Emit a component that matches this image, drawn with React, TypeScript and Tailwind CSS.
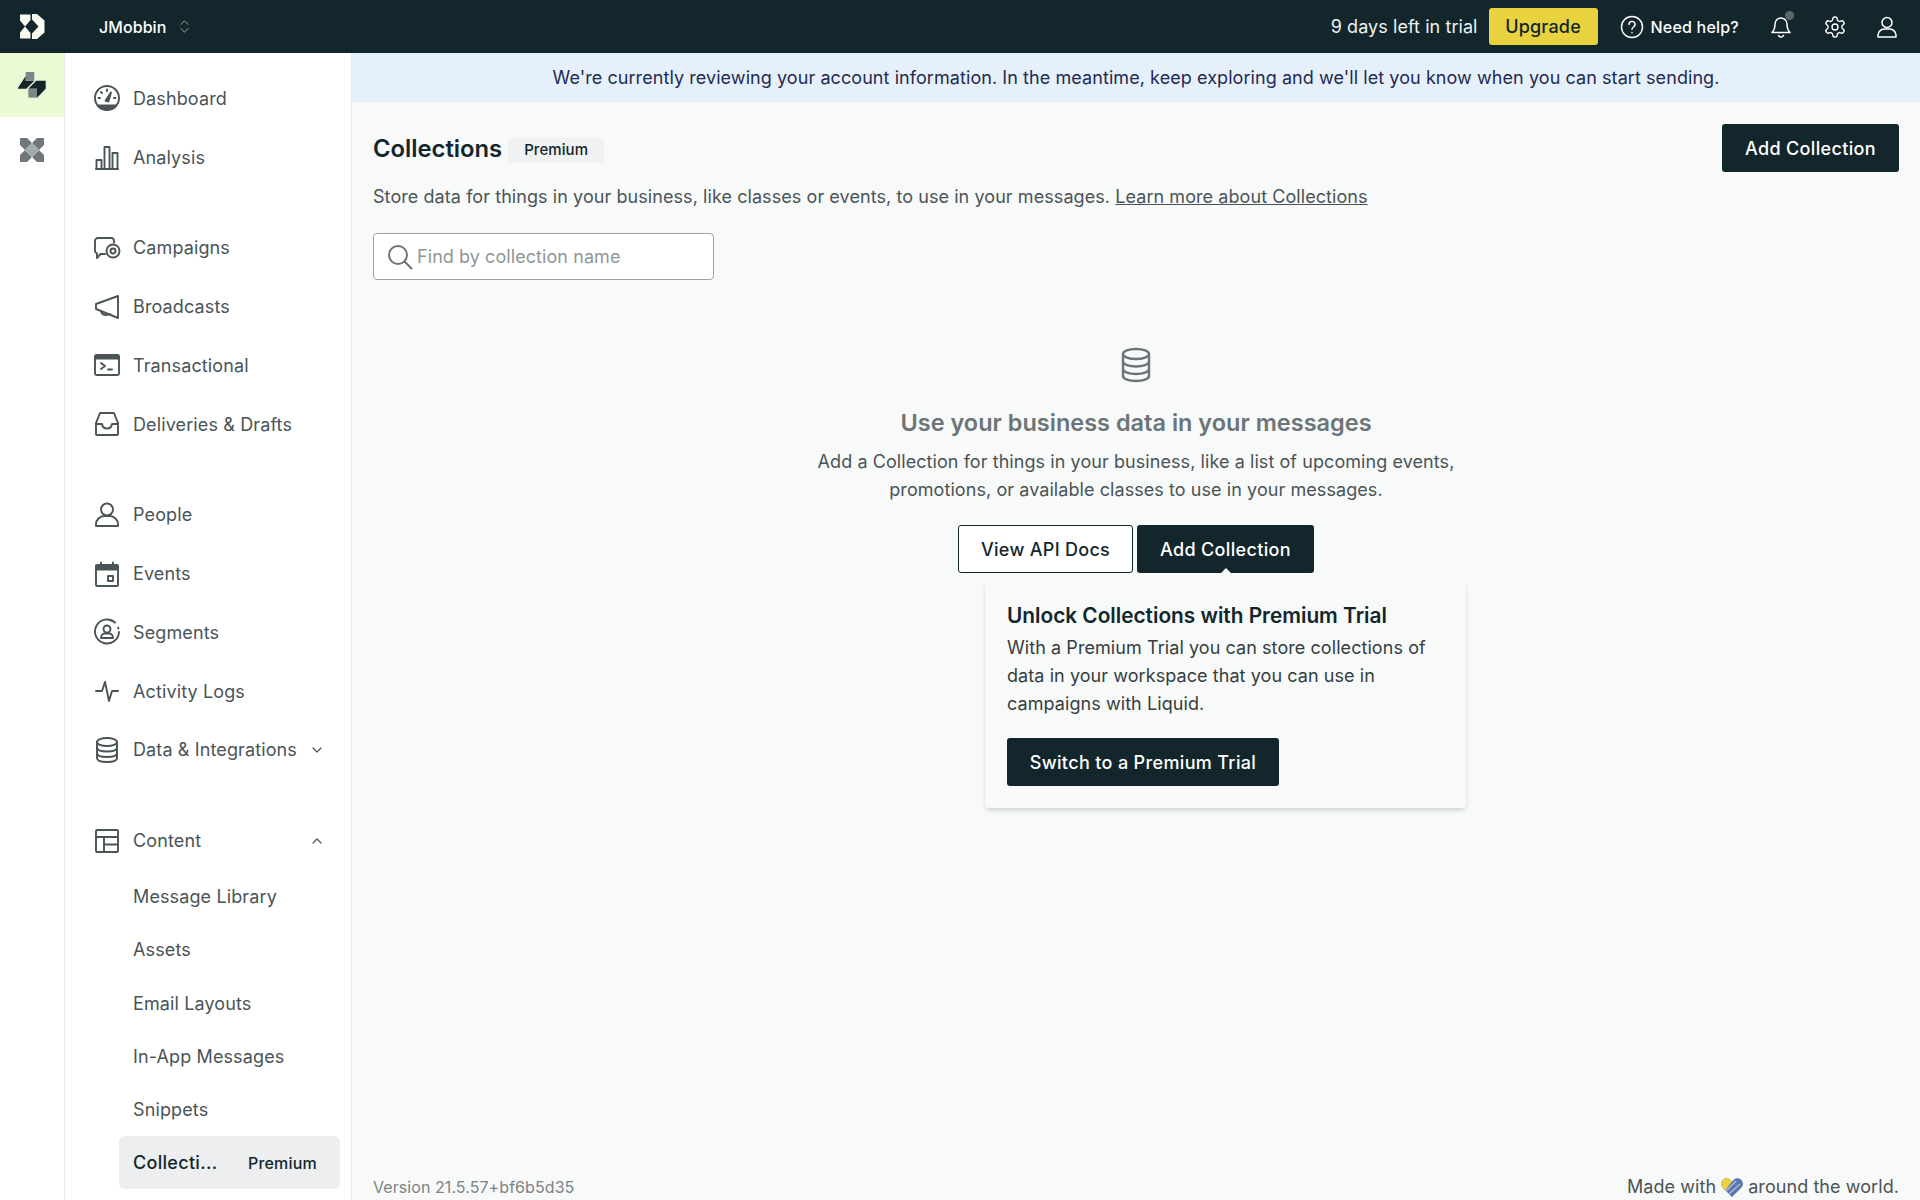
import React from 'react';
import { ChevronDown, ChevronUp, ChevronsUpDown } from 'lucide-react';

const sw = { fill: 'none', stroke: 'currentColor', strokeWidth: 1.9, strokeLinecap: 'round', strokeLinejoin: 'round' } as const;

function Svg({ children, size = 28, className = '' }: { children: React.ReactNode; size?: number; className?: string }) {
  return (
    <svg width={size} height={size} viewBox="0 0 28 28" className={`shrink-0 ${className}`} {...sw}>
      {children}
    </svg>
  );
}

const icons: Record<string, React.ReactNode> = {
  dashboard: (
    <>
      <circle cx="14" cy="14" r="12" />
      <path d="M5 21.500h18a12 12 0 0 1-18 0z" fill="currentColor" />
      <path d="M12.600 16.500 18 8.500l-2.600 9z" fill="currentColor" />
      <path d="M14 5.500v1.500M8 8l1 1M5.500 14H7M21 14h1.500" />
    </>
  ),
  analysis: (
    <>
      <path d="M3 26h22" />
      <rect x="3.500" y="17" width="5" height="9" />
      <rect x="11.500" y="4" width="5" height="22" />
      <rect x="19.500" y="10" width="5" height="16" />
    </>
  ),
  campaigns: (
    <>
      <path d="M12 20H7.500L4 24v-4.500A3 3 0 0 1 2 17V7a3 3 0 0 1 3-3h13a3 3 0 0 1 3 3v1.500" />
      <circle cx="20" cy="17" r="6.500" />
      <circle cx="20" cy="17" r="2.500" />
    </>
  ),
  broadcasts: (
    <>
      <path d="M25 3v22L3 16v-5z" />
      <path d="M8 18c.5 3 3 4 5 4s3-.5 4-1" />
    </>
  ),
  transactional: (
    <>
      <rect x="2" y="4" width="24" height="20" rx="1.500" />
      <path d="M2 6h24v1.500H2z" fill="currentColor" />
      <path d="m8 12 4 3-4 3M15 18.500h4" />
    </>
  ),
  deliveries: (
    <>
      <path d="M7 3h14l4 10v11a1 1 0 0 1-1 1H4a1 1 0 0 1-1-1V13z" />
      <path d="M3 14h6c.5 3 2.500 4.500 5 4.500s4.500-1.500 5-4.500h6" />
    </>
  ),
  people: (
    <>
      <circle cx="14" cy="8.500" r="6" />
      <path d="M3 25v-2c0-4 4-8 8-8h6c4 0 8 4 8 8v2z" />
    </>
  ),
  events: (
    <>
      <rect x="3" y="5" width="22" height="21" rx="1" />
      <path d="M3 6h22v3.500H3z" fill="currentColor" />
      <path d="M8 2.500V5M20 2.500V5" />
      <rect x="15" y="16" width="5" height="5" />
    </>
  ),
  segments: (
    <>
      <path d="M22 4.500A12 12 0 1 0 26 14M25 9.500l.4.9M18 2.700l1.200.4" />
      <circle cx="14" cy="11" r="3.500" />
      <path d="M8 20c0-3 2-4.500 4-4.500h4c2 0 4 1.500 4 4.500z" />
    </>
  ),
  activity: (
    <>
      <path d="M3 14h6l3-9 4 19 3-10h6" />
    </>
  ),
  data: (
    <>
      <ellipse cx="14" cy="6" rx="10" ry="4" />
      <path d="M4 6v16c0 2.500 4.500 4 10 4s10-1.500 10-4V6" />
      <path d="M4 11.500c0 2.500 4.500 4 10 4s10-1.500 10-4M4 17c0 2.500 4.500 4 10 4s10-1.500 10-4" />
    </>
  ),
  content: (
    <>
      <rect x="3" y="3" width="22" height="22" rx="1" />
      <path d="M3 10h22M11 10v15M11 17.500h14" />
    </>
  ),
};

const navGroups = [
  [
    { icon: 'dashboard', label: 'Dashboard' },
    { icon: 'analysis', label: 'Analysis' },
  ],
  [
    { icon: 'campaigns', label: 'Campaigns' },
    { icon: 'broadcasts', label: 'Broadcasts' },
    { icon: 'transactional', label: 'Transactional' },
    { icon: 'deliveries', label: 'Deliveries & Drafts' },
  ],
  [
    { icon: 'people', label: 'People' },
    { icon: 'events', label: 'Events' },
    { icon: 'segments', label: 'Segments' },
    { icon: 'activity', label: 'Activity Logs' },
    { icon: 'data', label: 'Data & Integrations', chevron: true },
  ],
];

const subItems = ['Message Library', 'Assets', 'Email Layouts', 'In-App Messages', 'Snippets'];

function NavRow({ icon, label, chevron }: { icon: string; label: string; chevron?: React.ReactNode }) {
  return (
    <div className="flex h-[58.75px] items-center gap-[12px] pl-[28px] pr-[26px] text-[#4a5456]">
      <Svg>{icons[icon]}</Svg>
      <span className="flex-1 whitespace-nowrap">{label}</span>
      {chevron}
    </div>
  );
}

function Header() {
  return (
    <header className="flex h-[53px] shrink-0 items-center bg-[#12262c] text-white">
      {/* logo */}
      <svg width="25" height="25" viewBox="0 0 25 25" className="ml-[20px] shrink-0" fill="#f7fbf2">
        <path d="M0 .5h10.500V6L5 12.500 0 6.500z" />
        <path d="M0 24.500h10.500V19L5 12.500l-5 6z" />
        <path d="M12 0h5l7.500 6.500v12L17 25h-5v-5.500l6.500-7L12 5.500z" />
      </svg>
      <span className="ml-[54px] text-[16px] font-medium">JMobbin</span>
      <ChevronsUpDown size={17} strokeWidth={1.3} className="ml-[10px] text-[#a8b2b4]" />

      <span className="ml-auto text-[18px] text-[#eef2f2]">9 days left in trial</span>
      <button className="ml-[11px] flex h-[37px] w-[109px] items-center justify-center rounded-[3px] bg-[#e8d33f] text-[18px] font-medium tracking-[0.2px] text-[#12262c]">
        Upgrade
      </button>
      <svg width="24" height="24" viewBox="0 0 24 24" className="ml-[22px]" fill="none" stroke="currentColor" strokeWidth="1.400" strokeLinecap="round">
        <circle cx="12" cy="12" r="10.500" />
        <path d="M9 9.500a3 3 0 1 1 4.500 2.500c-1 .6-1.500 1.200-1.500 2.300" />
        <path d="M12 17.500v.2" />
      </svg>
      <span className="ml-[7px] text-[16px] font-medium tracking-[0.2px]">Need help?</span>
      <div className="relative ml-[30px]">
        <svg width="24" height="24" viewBox="0 0 24 24" fill="none" stroke="currentColor" strokeWidth="1.500" strokeLinecap="round" strokeLinejoin="round" className="block">
          <path d="M12 3a6 6 0 0 0-6 6c0 5-2 7.500-3 8.500h18c-1-1-3-3.500-3-8.500a6 6 0 0 0-6-6z" />
          <path d="M9.500 20.500c.5 1 1.500 1.500 2.500 1.500s2-.5 2.500-1.500" />
        </svg>
        <span className="absolute -top-[4px] left-[16px] h-[9px] w-[9px] rounded-full bg-[#5b6668]" />
      </div>
      <svg width="24" height="24" viewBox="0 0 24 24" className="ml-[30px]" fill="none" stroke="currentColor" strokeWidth="1.400" strokeLinecap="round" strokeLinejoin="round">
        <path d="M12.220 2h-.44a2 2 0 0 0-2 2v.18a2 2 0 0 1-1 1.730l-.43.25a2 2 0 0 1-2 0l-.15-.08a2 2 0 0 0-2.730.73l-.22.38a2 2 0 0 0 .73 2.730l.15.1a2 2 0 0 1 1 1.720v.51a2 2 0 0 1-1 1.740l-.15.09a2 2 0 0 0-.73 2.730l.22.38a2 2 0 0 0 2.730.73l.15-.08a2 2 0 0 1 2 0l.43.25a2 2 0 0 1 1 1.730V20a2 2 0 0 0 2 2h.44a2 2 0 0 0 2-2v-.18a2 2 0 0 1 1-1.730l.43-.25a2 2 0 0 1 2 0l.15.08a2 2 0 0 0 2.730-.73l.22-.39a2 2 0 0 0-.73-2.730l-.15-.08a2 2 0 0 1-1-1.740v-.5a2 2 0 0 1 1-1.740l.15-.09a2 2 0 0 0 .73-2.730l-.22-.38a2 2 0 0 0-2.730-.73l-.15.08a2 2 0 0 1-2 0l-.43-.25a2 2 0 0 1-1-1.730V4a2 2 0 0 0-2-2z" />
        <circle cx="12" cy="12" r="3" />
      </svg>
      <svg width="24" height="24" viewBox="0 0 24 24" className="ml-[28px] mr-[21px]" fill="none" stroke="currentColor" strokeWidth="1.500" strokeLinejoin="round">
        <circle cx="12" cy="7.500" r="5" />
        <path d="M3 22v-2c0-3 3-6 6-6h6c3 0 6 3 6 6v2z" />
      </svg>
    </header>
  );
}

function Rail() {
  return (
    <div className="flex w-[65px] shrink-0 flex-col border-r border-[#e9ebeb] bg-white">
      <div className="flex h-[64px] items-center justify-center bg-[#e9fad5]">
        <svg width="28" height="26" viewBox="0 0 28 26">
          <path d="M0 15.700 7.700 4v4.700h8.600L8.300 16.700H0z" fill="#12262c" />
          <path d="M7.700 0h8.600v8.700H7.700z" fill="#7d8789" />
          <path d="M10.300 16.700 18.300 8.700h9.400v8L19 25.700v-9z" fill="#12262c" />
          <path d="M10.300 16.700H19v9h-8.700z" fill="#7d8789" />
        </svg>
      </div>
      <div className="flex h-[66px] items-center justify-center">
        <svg width="24" height="24" viewBox="0 0 24 24">
          <path d="M0 0h7l5 5-7 7-5-5zM24 0h-7l-5 5 7 7 5-5zM0 24h7l5-5-7-7-5 5zM24 24h-7l-5-5 7-7 5 5z" fill="#6f797b" />
          <path d="m12 5 7 7-7 7-7-7z" fill="#a3abac" />
        </svg>
      </div>
    </div>
  );
}

function Sidebar() {
  return (
    <nav className="flex w-[287px] shrink-0 flex-col gap-[32px] overflow-hidden border-r border-[#e9ebeb] bg-white pt-[16px] text-[18px] tracking-[0.12px]">
      {navGroups.map((group, i) => (
        <div key={i}>
          {group.map((item) => (
            <NavRow
              key={item.label}
              icon={item.icon}
              label={item.label}
              chevron={item.chevron ? <ChevronDown size={16} strokeWidth={1.8} /> : undefined}
            />
          ))}
        </div>
      ))}
      <div>
        <NavRow icon="content" label="Content" chevron={<ChevronUp size={16} strokeWidth={1.8} />} />
        <div className="flex flex-col">
          {subItems.map((label) => (
            <div key={label} className="flex h-[53.300px] items-center pl-[68px] text-[#4a5456]">
              {label}
            </div>
          ))}
          <div className="ml-[54px] mr-[11px] flex h-[53px] items-center justify-between rounded-[6px] bg-[#eceeef] pl-[14px] pr-[23px]">
            <span className="font-medium tracking-[0.3px] text-[#12262c]">Collecti...</span>
            <span className="text-[16px] font-medium tracking-[0.2px] text-[#12262c]">Premium</span>
          </div>
        </div>
      </div>
    </nav>
  );
}

function PrimaryButton({ children, className = '' }: { children: React.ReactNode; className?: string }) {
  return (
    <button className={`flex h-[48px] items-center justify-center rounded-[3px] bg-[#12262c] text-[18px] font-medium tracking-[0.35px] text-white ${className}`}>
      {children}
    </button>
  );
}

function EmptyState() {
  return (
    <div className="mt-[67px] flex flex-col items-center text-center">
      <svg width="30" height="36" viewBox="0 0 30 36" fill="none" stroke="#6b7577" strokeWidth="2.400">
        <ellipse cx="15" cy="7" rx="13" ry="5" />
        <path d="M2 7v22c0 3 6 5 13 5s13-2 13-5V7" />
        <path d="M2 14.500c0 3 6 5 13 5s13-2 13-5M2 22c0 3 6 5 13 5s13-2 13-5" />
      </svg>
      <h2 className="mt-[24px] text-[23.5px] font-semibold leading-[32px] tracking-normal text-[#6b7577]">Use your business data in your messages</h2>
      <p className="mt-[9px] text-[18px] leading-[28px] text-[#4a5456]">
        Add a Collection for things in your business, like a list of upcoming events,
        <br />
        promotions, or available classes to use in your messages.
      </p>
      <div className="mt-[21px] flex gap-[4px]">
        <button className="flex h-[48px] w-[175px] items-center justify-center rounded-[3px] border-[1.500px] border-[#12262c] bg-white text-[18px] font-medium tracking-[0.3px] text-[#12262c]">
          View API Docs
        </button>
        <div className="relative">
          <PrimaryButton className="w-[177px]">Add Collection</PrimaryButton>
          {/* popover */}
          <div className="absolute -left-[152px] top-[56px] w-[481px] rounded-[4px] bg-[#f8f9f9] px-[22px] pb-[22px] pt-[22px] text-left shadow-[0_3px_5px_-1px_rgba(18,38,44,0.2)]">
            <span className="absolute -top-[10px] left-[234px] h-[14px] w-[14px] rotate-45 bg-[#f8f9f9]" />
            <h3 className="relative -mt-[1px] text-[20.8px] font-semibold leading-[28px] tracking-normal text-[#12262c]">Unlock Collections with Premium Trial</h3>
            <p className="mt-[4px] text-[18px] leading-[28px] text-[#33403f]">
              With a Premium Trial you can store collections of data in your workspace that you can use in campaigns with Liquid.
            </p>
            <PrimaryButton className="mt-[20px] w-[272px]">Switch to a Premium Trial</PrimaryButton>
          </div>
        </div>
      </div>
    </div>
  );
}

export default function App() {
  return (
    <div className="flex h-[1200px] w-[1920px] flex-col overflow-hidden bg-[#f8f9f9] font-['Inter',sans-serif] tracking-[0.07px]">
      <Header />
      <div className="flex min-h-0 flex-1">
        <Rail />
        <Sidebar />
        <main className="flex min-w-0 flex-1 flex-col">
          <div className="flex h-[49px] shrink-0 items-center justify-center bg-[#e6f0fb] text-[18px] text-[#1f2a52]">
            We're currently reviewing your account information. In the meantime, keep exploring and we'll let you know when you can start sending.
          </div>
          <div className="flex flex-1 flex-col pl-[21px] pr-[21px] pt-[22px]">
            <div className="flex h-[48px] items-center">
              <h1 className="mt-[2px] text-[23.8px] font-semibold tracking-normal text-[#12262c]">Collections</h1>
              <span className="ml-[6px] mt-[5px] flex h-[25px] items-center rounded-[4px] bg-[#eff1f2] px-[16px] text-[15px] font-medium text-[#12262c]">
                Premium
              </span>
              <PrimaryButton className="ml-auto w-[177px]">Add Collection</PrimaryButton>
            </div>
            <p className="mt-[11px] text-[18px] leading-[28px] text-[#4a5456]">
              Store data for things in your business, like classes or events, to use in your messages.{' '}
              <span className="underline">Learn more about Collections</span>
            </p>
            <div className="mt-[22px] flex h-[47px] w-[341px] items-center rounded-[4px] border-[1.500px] border-[#9ca3a3] bg-white pl-[13px]">
              <svg width="26" height="26" viewBox="0 0 26 26" fill="none" stroke="#6b7577" strokeWidth="2" strokeLinecap="round">
                <circle cx="11" cy="11" r="9" />
                <path d="m17.500 17.500 7 7" />
              </svg>
              <span className="ml-[4px] text-[18px] text-[#8f9696]">Find by collection name</span>
            </div>
            <EmptyState />
            <div className="mt-auto flex items-center justify-between pb-[2px]">
              <span className="text-[16px] leading-[22px] text-[#7a8486]">Version 21.5.57+bf6b5d35</span>
              <span className="flex items-center text-[18px] leading-[22px] text-[#4a5456]">
                Made with
                <svg width="22" height="20" viewBox="0 0 22 20" className="mx-[5px]">
                  <path d="M11 20 1.500 10.500A5.500 5.500 0 0 1 9 2.500l2 2 2-2a5.500 5.500 0 0 1 7.500 8z" fill="#5a76ad" />
                  <path d="M1.500 10.500A5.500 5.500 0 0 1 9 2.500l2 2-6.500 8.500z" fill="#e8d33f" />
                  <path d="M5 14 15 4M8 17 19 7" stroke="#a9bad6" strokeWidth="1.500" />
                </svg>
                around the world.
              </span>
            </div>
          </div>
        </main>
      </div>
    </div>
  );
}
